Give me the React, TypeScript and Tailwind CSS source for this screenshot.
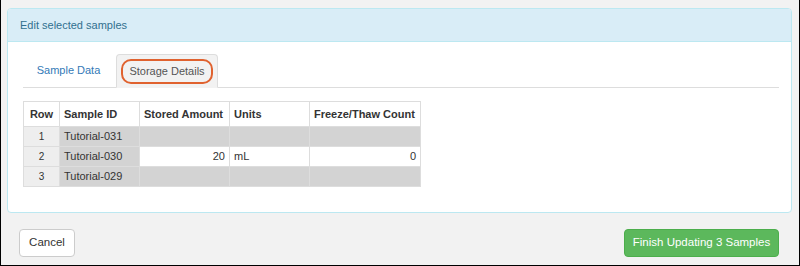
export default function App() {
  const rows = [
    { n: 1, id: "Tutorial-031", editable: false, amount: "", units: "", ft: "" },
    { n: 2, id: "Tutorial-030", editable: true, amount: "20", units: "mL", ft: "0" },
    { n: 3, id: "Tutorial-029", editable: false, amount: "", units: "", ft: "" },
  ];

  return (
    <div
      className="w-[800px] h-[266px] bg-[#f2f2f2] border-l border-r border-b border-black pt-[8px] pl-[6px] pr-[7px] text-[#333]"
      style={{ fontFamily: '"Liberation Sans", Arial, sans-serif' }}
    >
      {/* Panel */}
      <div className="h-[205px] bg-white border border-[#bce8f1] rounded-[4px] overflow-hidden">
        <div className="h-[33px] bg-[#d9edf7] border-b border-[#bce8f1] px-[12px] flex items-center text-[11px] text-[#31708f]">
          Edit selected samples
        </div>

        <div className="pl-[15px] pr-[12px] pt-[12px]">
          {/* Tabs */}
          <div className="flex items-end border-b border-[#ddd] h-[34px]">
            <div className="w-[91px] h-[33px] flex items-center justify-center text-[11px] text-[#337ab7] whitespace-nowrap">
              Sample Data
            </div>
            <div className="ml-[2px] w-[102px] h-[34px] -mb-px bg-[#f2f2f2] border border-[#ddd] border-b-transparent rounded-t-[4px] flex items-center justify-center">
              <div className="w-[92px] h-[25px] mt-[1px] border-2 border-[#e0622f] rounded-[10px] flex items-center justify-center text-[11px] text-[#555] whitespace-nowrap">
                Storage Details
              </div>
            </div>
          </div>

          {/* Grid */}
          <table className="mt-[13px] border-collapse table-fixed text-[11px] whitespace-nowrap">
            <colgroup>
              <col className="w-[36px]" />
              <col className="w-[80px]" />
              <col className="w-[90px]" />
              <col className="w-[80px]" />
              <col className="w-[111px]" />
            </colgroup>
            <thead>
              <tr className="h-[25px]">
                <th className="border border-[#ddd] font-bold text-center px-[3px]">Row</th>
                <th className="border border-[#ddd] font-bold text-left px-[4px]">Sample ID</th>
                <th className="border border-[#ddd] font-bold text-left px-[4px]">Stored Amount</th>
                <th className="border border-[#ddd] font-bold text-left px-[4px]">Units</th>
                <th className="border border-[#ddd] font-bold text-left px-[4px]">Freeze/Thaw Count</th>
              </tr>
            </thead>
            <tbody>
              {rows.map((r) => (
                <tr key={r.n} className="h-[20px]">
                  <td className="border border-[#ddd] bg-[#eeeeee] text-center text-[10px] py-0">{r.n}</td>
                  <td className="border border-[#ddd] bg-[#d3d3d3] px-[4px] py-0">{r.id}</td>
                  <td className={`border border-[#ddd] px-[4px] py-0 text-right ${r.editable ? "bg-white" : "bg-[#d3d3d3]"}`}>{r.amount}</td>
                  <td className={`border border-[#ddd] px-[4px] py-0 ${r.editable ? "bg-white" : "bg-[#d3d3d3]"}`}>{r.units}</td>
                  <td className={`border border-[#ddd] px-[4px] py-0 text-right ${r.editable ? "bg-white" : "bg-[#d3d3d3]"}`}>{r.ft}</td>
                </tr>
              ))}
            </tbody>
          </table>
        </div>
      </div>

      {/* Footer */}
      <div className="mt-[16px] pl-[12px] pr-[13px] flex justify-between">
        <button className="w-[56px] h-[28px] bg-white border border-[#ccc] rounded-[4px] text-[11.5px] text-[#333]">
          Cancel
        </button>
        <button className="w-[155px] h-[28px] bg-[#5cb85c] border border-[#4cae4c] rounded-[4px] text-[11.5px] text-white">
          Finish Updating 3 Samples
        </button>
      </div>
    </div>
  );
}
